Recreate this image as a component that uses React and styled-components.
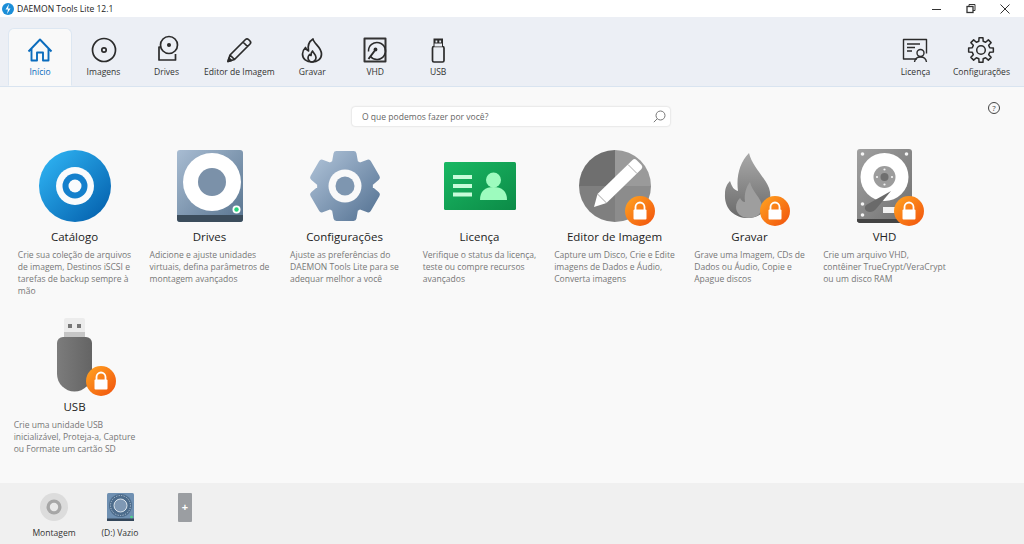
import React from "react"
import styled, { createGlobalStyle } from "styled-components"

const Global = createGlobalStyle`
  html, body {
    margin: 0;
    padding: 0;
    height: 100%;
    overflow: hidden;
    background: #f9f9f9;
    font-family: "Open Sans", "Noto Sans", sans-serif;
  }
`

const gearPath = (cx, cy, outer, inner, teeth, hw1, hw2) => {
  const pts = []
  const pt = (r, deg) => {
    const a = (deg * Math.PI) / 180
    return `${(cx + r * Math.cos(a)).toFixed(2)} ${(cy + r * Math.sin(a)).toFixed(2)}`
  }
  for (let i = 0; i < teeth; i++) {
    const a = -90 + (360 / teeth) * i
    pts.push(pt(inner, a - hw2), pt(outer, a - hw1), pt(outer, a + hw1), pt(inner, a + hw2))
  }
  return "M" + pts.join("L") + "Z"
}

// toolbar icons
const Line = ({ color = "#2b2b2b", width = 1.7, children }) => (
  <svg width='30' height='30' viewBox='0 0 30 30' fill='none' stroke={color} strokeWidth={width} strokeLinejoin='round'>
    {children}
  </svg>
)

const HomeIcon = () => (
  <Line color='#0b6cbd' width={1.9}>
    <path d='M3.500 16.500 15 4.500l11.500 12M6.500 14v11.500h5.500v-8h6v8h5.500V14' />
  </Line>
)
const DiscIcon = () => (
  <Line>
    <circle cx='15' cy='15' r='11.500' />
    <circle cx='15' cy='15' r='2.200' />
  </Line>
)
const DriveIcon = () => (
  <Line>
    <path d='M13 12H7v13h16.500v-6' />
    <circle cx='17' cy='10' r='8.500' fill='#eceff5' />
    <circle cx='17' cy='10' r='1.200' fill='#2b2b2b' />
  </Line>
)
const PencilIcon = () => (
  <Line>
    <path d='M4 26.500l2-6.500L21.500 4.500a2.200 2.200 0 0 1 3 0l1.500 1.500a2.200 2.200 0 0 1 0 3L10.500 24.500zM6 20l4.500 4.500M19 7l4.500 4.500' />
    <path d='M4 26.500l1-3.500 2.500 2.500z' fill='#2b2b2b' />
  </Line>
)
const FlameIcon = () => (
  <Line>
    <path d='M16 4c.5 4.500 8.500 8 8.500 15 0 5-4 8-9.500 8s-9.500-3-9.500-8c0-3 1.500-5 3-6.500.5 2 1.500 3 3 3.500C10.500 11 12 6.500 16 4z' />
    <path d='M15.500 16c.5 2 3.500 3.500 3.500 6.500 0 2.500-2 4.500-4 4.500s-4-2-4-4c0-1.500.5-2.500 1.500-3.500.5.8 1 1 1.500 1 0-2 .5-3.500 1.500-4.500z' />
  </Line>
)
const HddIcon = () => (
  <Line width={1.500}>
    <rect x='4.500' y='3.500' width='21' height='23' stroke='#333' strokeWidth='2' />
    <path d='M10.500 21.500a8.500 8.500 0 1 0-2-5' />
    <circle cx='15.500' cy='14.500' r='1.200' fill='#2b2b2b' />
    <path d='M14.500 16 8.500 24' strokeWidth='2' />
  </Line>
)
const UsbIcon = () => (
  <Line width={1.700}>
    <rect x='9.500' y='11.500' width='11.500' height='15.500' rx='1.500' />
    <rect x='10.500' y='3.500' width='9.500' height='8' fill='#2b2b2b' stroke='none' />
    <path d='M12.500 6.500h1.800M16.300 6.500h1.800' stroke='#eceff5' strokeWidth='1.800' />
    <path d='M11.500 8.500h7.500v3h-7.500z' fill='#eceff5' stroke='none' />
  </Line>
)
const LicenseIcon = () => (
  <Line width={1.400}>
    <path d='M17 24H3.500V4.500h23v14' />
    <path d='M7 9h13M7 12.500h8M7 16h5' />
    <circle cx='20.500' cy='18' r='3.500' />
    <path d='M14.500 27c.5-3.500 3-5 6-5s5.500 1.500 6 5' />
  </Line>
)
const CogIcon = () => (
  <Line width={1.500}>
    <path d={gearPath(15, 15, 12.5, 9, 8, 9, 14)} />
    <circle cx='15' cy='15' r='4.300' />
  </Line>
)

// big home page drawings
const CatalogArt = () => (
  <svg width='72' height='72' viewBox='0 0 72 72'>
    <defs>
      <linearGradient id='catalogBlue' x1='0.1' y1='0.1' x2='0.9' y2='0.9'>
        <stop offset='0' stopColor='#2db0f0' />
        <stop offset='1' stopColor='#0664b0' />
      </linearGradient>
    </defs>
    <circle cx='36' cy='36' r='36' fill='url(#catalogBlue)' />
    <circle cx='36' cy='36' r='19' fill='#fafbfc' />
    <circle cx='36' cy='36' r='12.500' fill='#1580cc' />
    <circle cx='36' cy='36' r='6.500' fill='#fafbfc' />
  </svg>
)
const DrivesArt = () => (
  <svg width='66' height='72' viewBox='0 0 66 72'>
    <defs>
      <linearGradient id='driveSteel' x1='0' y1='0' x2='1' y2='1'>
        <stop offset='0' stopColor='#a8bcd2' />
        <stop offset='1' stopColor='#58748f' />
      </linearGradient>
    </defs>
    <rect width='66' height='72' rx='3' fill='url(#driveSteel)' />
    <path d='M0 65h66v4a3 3 0 0 1-3 3H3a3 3 0 0 1-3-3z' fill='#3c4d5c' />
    <circle cx='35' cy='32' r='29' fill='#fff' />
    <circle cx='35' cy='32' r='14' fill='#7b91a9' />
    <circle cx='59.500' cy='59.500' r='4' fill='#fff' />
    <circle cx='59.500' cy='59.500' r='2.200' fill='#27d67c' />
  </svg>
)
const SettingsArt = () => (
  <svg width='72' height='72' viewBox='0 0 72 72'>
    <defs>
      <linearGradient id='gearSteel' gradientUnits='userSpaceOnUse' x1='8' y1='8' x2='64' y2='64'>
        <stop offset='0' stopColor='#a9bdd3' />
        <stop offset='1' stopColor='#5b7898' />
      </linearGradient>
    </defs>
    <path d={gearPath(36, 36, 33, 25, 6, 15, 24)} fill='url(#gearSteel)' stroke='url(#gearSteel)' strokeWidth='6' strokeLinejoin='round' />
    <circle cx='36' cy='36' r='16.500' fill='#f9f9f9' />
    <circle cx='36' cy='36' r='9.500' fill='#7e96b0' />
  </svg>
)
const LicenseArt = () => (
  <svg width='72' height='48' viewBox='0 0 72 48'>
    <defs>
      <linearGradient id='cardGreen' x1='0' y1='0' x2='1' y2='1'>
        <stop offset='0' stopColor='#19b863' />
        <stop offset='1' stopColor='#0c8b47' />
      </linearGradient>
    </defs>
    <rect width='72' height='48' rx='1.500' fill='url(#cardGreen)' />
    <path d='M9 13h19v4H9zM9 22h19v4H9zM9 30.500h19v4H9z' fill='#c7fcd9' />
    <circle cx='49.500' cy='18' r='7.500' fill='#9dfbbe' />
    <path d='M36 38c0-9 5-13 13.500-13S63 29 63 38z' fill='#9dfbbe' />
  </svg>
)
const EditorArt = () => (
  <svg width='72' height='72' viewBox='0 0 72 72'>
    <path d='M36 36V0A36 36 0 0 0 0 36z' fill='#6f6f6f' />
    <path d='M36 36V0a36 36 0 0 1 36 36z' fill='#9a9a9a' />
    <path d='M36 36h36a36 36 0 0 1-36 36z' fill='#8c8c8c' />
    <path d='M36 36v36A36 36 0 0 1 0 36z' fill='#7f7f7f' />
    <path d='M15 57l3.500-13 35-34a3 3 0 0 1 4 0l5 5a3 3 0 0 1 0 4L27.500 53z' fill='#fff' />
    <path d='M49 14.500l9 9' stroke='#909090' strokeWidth='0.8' />
    <path d='M18.500 44l9 9' stroke='#8c8c8c' strokeWidth='0.8' />
  </svg>
)
const BurnArt = () => (
  <svg width='72' height='72' viewBox='0 0 72 72'>
    <defs>
      <linearGradient id='flameGrey' x1='0.5' y1='0' x2='0.5' y2='1'>
        <stop offset='0' stopColor='#a9a9a9' />
        <stop offset='1' stopColor='#6a6a6a' />
      </linearGradient>
    </defs>
    <path d='M35 3C38 16 50 26 55 38 60 52 50 68 34 68 20 68 10 58 11 44 11 38 13 34 16 31 18 37 20 40 24 41 22 26 26 12 35 3Z' fill='url(#flameGrey)' />
    <path d='M36 32C38 42 48 48 48 57 48 64 42 68 35 68 27 68 22 63 22 57 22 53 24 50 26 48 28 51 29 52 31 52 30 44 32 37 36 32Z' fill='#9e9e9e' />
  </svg>
)
const VhdArt = () => (
  <svg width='55' height='74' viewBox='0 0 55 74'>
    <defs>
      <linearGradient id='hddGrey' x1='0' y1='0' x2='1' y2='1'>
        <stop offset='0' stopColor='#a0a0a0' />
        <stop offset='1' stopColor='#707070' />
      </linearGradient>
    </defs>
    <rect width='55' height='74' rx='3' fill='url(#hddGrey)' />
    <path d='M0 70h55a3 3 0 0 1-3 4H3a3 3 0 0 1-3-4z' fill='#444' />
    <circle cx='27.500' cy='28' r='24' fill='#fff' />
    <circle cx='27.500' cy='28' r='11' fill='#9c9c9c' />
    <circle cx='27.500' cy='28' r='4' fill='#6f6f6f' />
    <g fill='#f4f4f4'>
      <circle cx='27.500' cy='20.500' r='1.100' />
      <circle cx='27.500' cy='35.500' r='1.100' />
      <circle cx='20' cy='28' r='1.100' />
      <circle cx='35' cy='28' r='1.100' />
      <circle cx='5.500' cy='5' r='1.800' />
      <circle cx='49.500' cy='5' r='1.800' />
      <circle cx='5.500' cy='55' r='1.800' />
      <circle cx='5.500' cy='66' r='1.800' />
    </g>
    <path d='M9.500 62c-2.500-2-2-5 .5-6.500L34 42 19 60c-2.500 3-6.500 4-9.500 2z' fill='#6a6a6a' />
    <rect x='26' y='58' width='13' height='6' fill='#f2f2f2' />
  </svg>
)
const UsbArt = () => (
  <svg width='36' height='74' viewBox='0 0 36 74'>
    <defs>
      <linearGradient id='stickGrey' x1='0' y1='0' x2='1' y2='0'>
        <stop offset='0' stopColor='#7c7c7c' />
        <stop offset='1' stopColor='#646464' />
      </linearGradient>
    </defs>
    <path d='M7 2a2 2 0 0 1 2-2h17a2 2 0 0 1 2 2v17H7z' fill='#ececec' />
    <path d='M7 14h21v5H7z' fill='#c6c6c6' />
    <rect x='11' y='6' width='4' height='4' fill='#777' />
    <rect x='20' y='6' width='4' height='4' fill='#777' />
    <path d='M0 25a6 6 0 0 1 6-6h23a6 6 0 0 1 6 6v31a17.500 17.500 0 0 1-35 0z' fill='url(#stickGrey)' />
  </svg>
)

const cards = [
  { art: <CatalogArt />, title: "Catálogo", lines: ["Crie sua coleção de arquivos", "de imagem, Destinos iSCSI e", "tarefas de backup sempre à", "mão"] },
  { art: <DrivesArt />, title: "Drives", lines: ["Adicione e ajuste unidades", "virtuais, defina parâmetros de", "montagem avançados"] },
  { art: <SettingsArt />, title: "Configurações", lines: ["Ajuste as preferências do", "DAEMON Tools Lite para se", "adequar melhor a você"] },
  { art: <LicenseArt />, title: "Licença", lines: ["Verifique o status da licença,", "teste ou compre recursos", "avançados"] },
  { art: <EditorArt />, title: "Editor de Imagem", locked: 46, lines: ["Capture um Disco, Crie e Edite", "imagens de Dados e Áudio,", "Converta imagens"] },
  { art: <BurnArt />, title: "Gravar", locked: 46, lines: ["Grave uma Imagem, CDs de", "Dados ou Áudio, Copie e", "Apague discos"] },
  { art: <VhdArt />, title: "VHD", locked: 45, lines: ["Crie um arquivo VHD,", "contêiner TrueCrypt/VeraCrypt", "ou um disco RAM"] },
  { art: <UsbArt />, title: "USB", locked: 47, tall: true, lines: ["Crie uma unidade USB", "inicializável, Proteja-a, Capture", "ou Formate um cartão SD"] },
]

const leftTabs = [
  { icon: <HomeIcon />, label: "Início", active: true },
  { icon: <DiscIcon />, label: "Imagens" },
  { icon: <DriveIcon />, label: "Drives" },
  { icon: <PencilIcon />, label: "Editor de Imagem" },
  { icon: <FlameIcon />, label: "Gravar" },
  { icon: <HddIcon />, label: "VHD" },
  { icon: <UsbIcon />, label: "USB" },
]

const rightTabs = [
  { icon: <LicenseIcon />, label: "Licença" },
  { icon: <CogIcon />, label: "Configurações" },
]

const Tab = ({ icon, label, active }) => (
  <TabItem $active={active}>
    {icon}
    <TabLabel $active={active}>{label}</TabLabel>
  </TabItem>
)

const Lock = ({ left }) => (
  <LockBadge $left={left}>
    <svg width='30' height='30' viewBox='0 0 30 30'>
      <defs>
        <linearGradient id='lockOrange' x1='0.1' y1='0.1' x2='0.9' y2='0.9'>
          <stop offset='0' stopColor='#ff9d1f' />
          <stop offset='1' stopColor='#f2590f' />
        </linearGradient>
      </defs>
      <circle cx='15' cy='15' r='15' fill='url(#lockOrange)' />
      <path d='M10.500 14v-3a4.500 4.500 0 0 1 9 0v3' fill='none' stroke='#fff' strokeWidth='1.800' />
      <rect x='8.500' y='13.500' width='13' height='10' rx='1' fill='#fff' />
    </svg>
  </LockBadge>
)

const App = () => (
  <Page>
    <Global />
    <TitleBar>
      <svg width='12' height='12' viewBox='0 0 12 12'>
        <circle cx='6' cy='6' r='6' fill='#1b8ed8' />
        <path d='M7 1 3.500 6.500H6L5 11l3.500-5.500H6z' fill='#fff' />
      </svg>
      <AppName>DAEMON Tools Lite 12.1</AppName>
      <WindowButtons>
        <svg width='10' height='10' viewBox='0 0 10 10' stroke='#333' fill='none'>
          <path d='M0 5.500h9' />
        </svg>
        <svg width='10' height='10' viewBox='0 0 10 10' stroke='#333' fill='none'>
          <rect x='1' y='2.500' width='6' height='6' strokeWidth='1.300' />
          <path d='M3 2.500v-2h6v6H7' />
        </svg>
        <svg width='10' height='10' viewBox='0 0 10 10' stroke='#333' fill='none'>
          <path d='M.5.500l9 9M9.500.500l-9 9' />
        </svg>
      </WindowButtons>
    </TitleBar>

    <Toolbar>
      <TabGroup>
        {leftTabs.map((t) => (
          <Tab key={t.label} {...t} />
        ))}
      </TabGroup>
      <TabGroup>
        {rightTabs.map((t) => (
          <Tab key={t.label} {...t} />
        ))}
      </TabGroup>
    </Toolbar>

    <Main>
      <SearchRow>
        <SearchBox>
          <SearchText>O que podemos fazer por você?</SearchText>
          <svg width='13' height='13' viewBox='0 0 13 13' fill='none' stroke='#777'>
            <circle cx='7.500' cy='5.500' r='4.500' />
            <path d='M4.300 8.700.8 12.200' />
          </svg>
        </SearchBox>
        <Help>?</Help>
      </SearchRow>
      <CardGrid>
        {cards.map((c) => (
          <Card key={c.title}>
            <ArtBox $tall={c.tall}>
              {c.art}
              {c.locked && <Lock left={c.locked} />}
            </ArtBox>
            <CardTitle>{c.title}</CardTitle>
            <CardText>
              {c.lines.map((l) => (
                <div key={l}>{l}</div>
              ))}
            </CardText>
          </Card>
        ))}
      </CardGrid>
    </Main>

    <BottomBar>
      <DockItem>
        <svg width='28' height='28' viewBox='0 0 28 28'>
          <circle cx='14' cy='14' r='14' fill='#dcdcdc' />
          <circle cx='14' cy='14' r='7.500' fill='#a6a6a6' />
          <circle cx='14' cy='14' r='4.200' fill='#e8e8e8' />
        </svg>
        <DockLabel>Montagem</DockLabel>
      </DockItem>
      <DockItem>
        <svg width='27' height='28' viewBox='0 0 27 28'>
          <rect width='27' height='28' rx='1.500' fill='#6f90b2' />
          <rect y='25.500' width='27' height='2.500' fill='#34465a' />
          <circle cx='13.500' cy='12.500' r='11.500' fill='#4d6c8c' />
          <circle cx='13.500' cy='12.500' r='10' fill='none' stroke='#c5d3e0' strokeWidth='1' strokeDasharray='1 1.500' />
          <circle cx='13.500' cy='12.500' r='6.500' fill='#7f98b4' stroke='#dbe4ec' strokeWidth='1' />
          <circle cx='24.500' cy='24' r='1.300' fill='#4ed38a' />
        </svg>
        <DockLabel>(D:) Vazio</DockLabel>
      </DockItem>
      <AddButton>+</AddButton>
    </BottomBar>
  </Page>
)

// Styles
const Page = styled.div`
  display: flex;
  flex-direction: column;
  height: 100vh;
  overflow: hidden;
`

const TitleBar = styled.div`
  display: flex;
  align-items: center;
  flex: 0 0 17px;
  padding-left: 2px;
  background: #fff;
`

const AppName = styled.span`
  margin-left: 3px;
  font-size: 8.55px;
  color: #222;
`

const WindowButtons = styled.div`
  display: flex;
  gap: 24px;
  margin-left: auto;
  padding-right: 14px;
  svg {
    display: block;
  }
`

const Toolbar = styled.div`
  display: flex;
  justify-content: space-between;
  flex: 0 0 69px;
  box-sizing: border-box;
  padding: 11px 8px 0;
  background: #eceff5;
  border-bottom: 1px solid #d9e4f0;
`

const TabGroup = styled.div`
  display: flex;
`

const TabItem = styled.div`
  display: flex;
  flex-direction: column;
  align-items: center;
  box-sizing: border-box;
  min-width: ${(p) => (p.$active ? "64px" : "63px")};
  height: 58px;
  padding: 6px 5px 0;
  border-radius: 6px 6px 0 0;
  background: ${(p) => (p.$active ? "#f9f9f9" : "transparent")};
  border: 1px solid ${(p) => (p.$active ? "#dde7f2" : "transparent")};
  border-bottom-color: ${(p) => (p.$active ? "#f9f9f9" : "transparent")};
  svg {
    display: block;
    flex: none;
  }
`

const TabLabel = styled.span`
  font-size: 8.55px;
  line-height: 14px;
  white-space: nowrap;
  color: ${(p) => (p.$active ? "#0b6cbd" : "#333")};
`

const Main = styled.div`
  flex: 1;
  min-height: 0;
  background: #f9f9f9;
`

const SearchRow = styled.div`
  display: grid;
  grid-template-columns: 1fr 318px 1fr;
  padding: 20px 2px 0 0;
`

const SearchBox = styled.div`
  grid-column: 2;
  display: flex;
  align-items: center;
  justify-content: space-between;
  height: 19px;
  padding: 0 4px 0 10px;
  background: #fff;
  border-radius: 3px;
  box-shadow: 0 0 2px rgba(0, 0, 0, 0.22);
`

const SearchText = styled.span`
  font-size: 8.55px;
  color: #666;
`

const Help = styled.div`
  justify-self: end;
  width: 10px;
  height: 10px;
  margin: -5px 22px 0 0;
  border: 1px solid #444;
  border-radius: 50%;
  font-size: 8px;
  line-height: 10px;
  text-align: center;
  color: #444;
`

const CardGrid = styled.div`
  display: grid;
  grid-template-columns: repeat(7, 135px);
  row-gap: 21px;
  margin-top: 24px;
  padding-left: 7px;
`

const Card = styled.div`
  display: flex;
  flex-direction: column;
  align-items: center;
`

const ArtBox = styled.div`
  position: relative;
  display: flex;
  align-items: center;
  justify-content: center;
  width: 72px;
  height: ${(p) => (p.$tall ? "74px" : "72px")};
  svg {
    display: block;
    flex: none;
  }
`

const LockBadge = styled.div`
  position: absolute;
  left: ${(p) => p.$left}px;
  bottom: -4px;
  width: 30px;
  height: 30px;
`

const CardTitle = styled.div`
  margin-top: 7px;
  font-size: 11.5px;
  line-height: 16px;
  color: #222;
`

const CardText = styled.div`
  margin-top: 4px;
  font-size: 8.55px;
  line-height: 12px;
  white-space: nowrap;
  color: #777;
`

const BottomBar = styled.div`
  display: flex;
  flex: 0 0 61px;
  box-sizing: border-box;
  padding-top: 10px;
  background: #f0f0f0;
`

const DockItem = styled.div`
  display: flex;
  flex-direction: column;
  align-items: center;
  width: 66px;
  &:first-child {
    margin-left: 21px;
  }
  svg {
    display: block;
    flex: none;
  }
`

const DockLabel = styled.span`
  margin-top: 6px;
  font-size: 8.55px;
  line-height: 13px;
  white-space: nowrap;
  color: #333;
`

const AddButton = styled.div`
  width: 14px;
  height: 29px;
  margin-left: 25px;
  background: #9b9ea2;
  border-radius: 1px;
  font-size: 11px;
  font-weight: 700;
  line-height: 27px;
  text-align: center;
  color: #fff;
`

export default App
